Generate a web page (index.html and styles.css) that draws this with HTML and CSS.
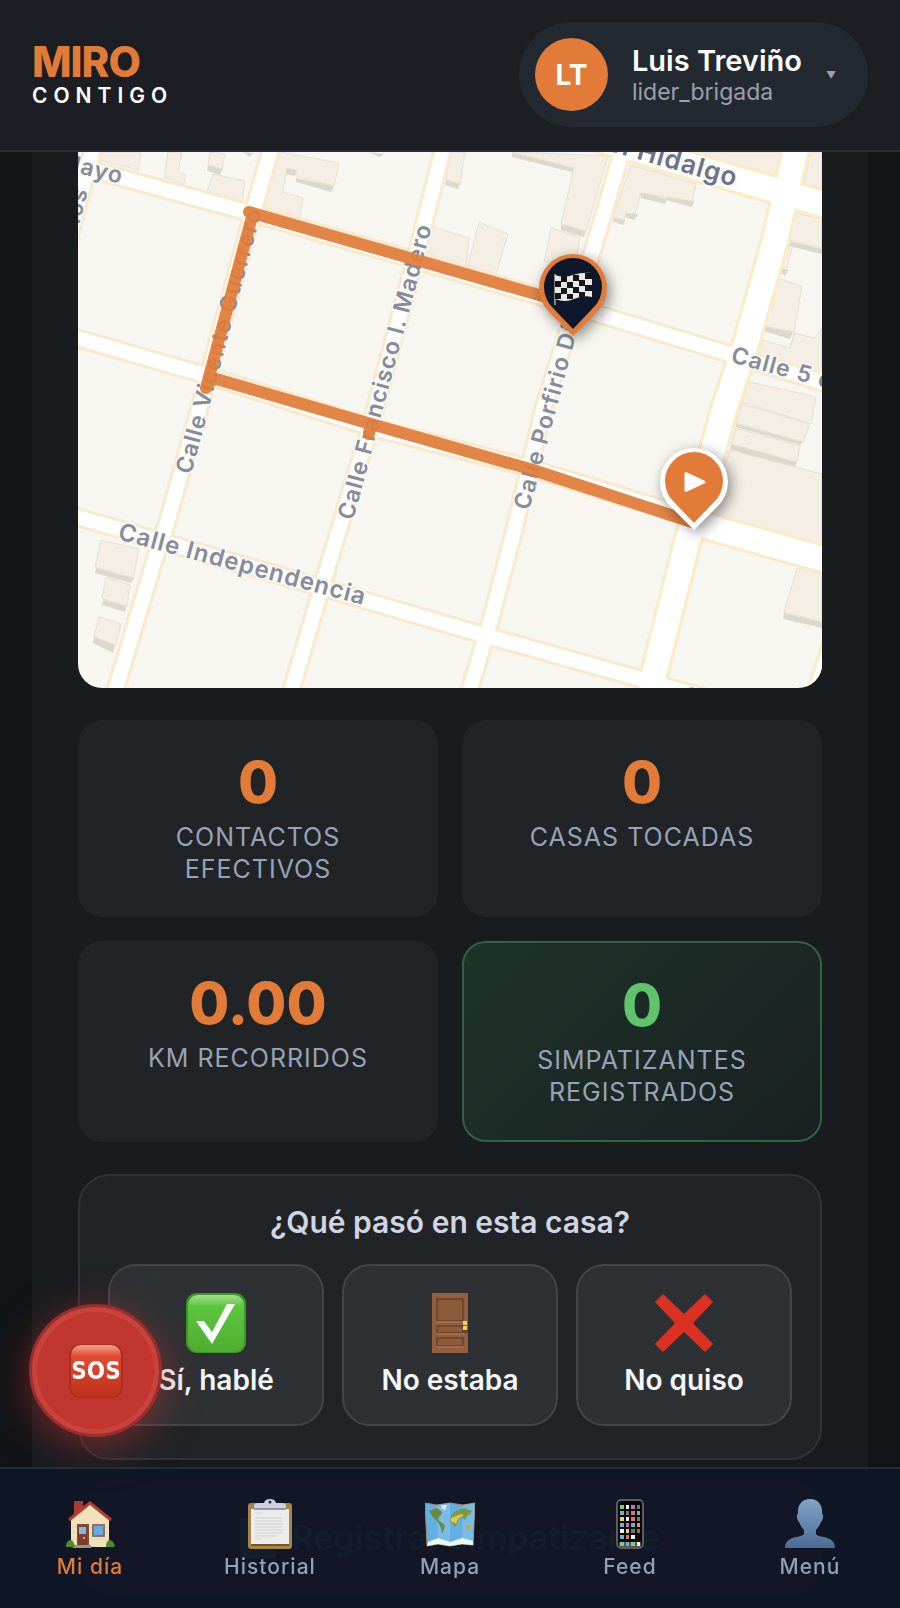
FILE: index.html
```
<!DOCTYPE html>
<html lang="es">
  <head>
    <meta charset="UTF-8" />
    <meta name="viewport" content="width=device-width, initial-scale=1.0" />
    <title>Miro Contigo - Mi día</title>
    <link rel="stylesheet" href="styles.css">
  </head>
  <body>
    <header class="topbar">
      <a class="brand" href="#">
        <span class="brand-name">MIRO</span>
        <span class="brand-sub">CONTIGO</span>
      </a>
      <button class="user" type="button">
        <span class="avatar">LT</span>
        <span class="user-info">
          <span class="user-name">Luis Treviño</span>
          <span class="user-role">lider_brigada</span>
        </span>
        <span class="caret">▼</span>
      </button>
    </header>

    <main class="panel">
      <svg class="map" viewBox="78 152 744 536" role="img" aria-label="Mapa de la ruta">
        <defs>
          <g id="streets-small">
            <path d="M94 145 L77 207 L66 250" />
            <path d="M78 166 L250 213 L400 256 L545 298 L723 352 L830 385" />
            <path d="M70 336 L205 375 L370 427 L530 468 L700 520" />
            <path d="M70 515 L160 541 L323 588 L480 634 L637 678 L720 702" />
            <path d="M272 145 L255 205 L205 388 L167 523 L157 552 L114 695" />
            <path d="M444 145 L420 240 L372 420 L338 533 L323 583 L290 695" />
            <path d="M624 145 L593 250 L568 330 L543 410 L515 527 L490 623 L468 695" />
          </g>
          <g id="streets-big">
            <path d="M797 145 L775 240 L747 340 L724 410 L687 543 L650 690" />
            <path d="M600 139 L740 180 L830 206" />
            <path d="M690 521 L723 531 L830 561" />
            <path d="M838 640 L818 700" />
          </g>
        </defs>
        <rect x="78" y="152" width="744" height="536" fill="#f7f6f0" />

        <!-- buildings: shade first, roof on top -->
        <g class="shade">
          <path d="M208 165 L223 168 L220 175 L207 171 Z" />
          <path d="M296 178 L334 186 L331 192 L296 182 Z" />
          <path d="M286 168 L298 171 L294 176 L286 174 Z" />
          <path d="M368 152 L384 154 L380 157 Z" />
          <path d="M243 152 L253 153 L250 157 Z" />
          <path d="M446 180 L460 184 L458 189 L445 185 Z" />
          <path d="M512 153 L574 167 L572 172 L512 157 Z" />
          <path d="M561 224 L586 231 L584 237 L561 230 Z" />
          <path d="M641 192 L667 199 L665 204 L641 198 Z" />
          <path d="M667 194 L694 201 L692 207 L666 200 Z" />
          <path d="M626 212 L638 214 L634 220 L625 217 Z" />
          <path d="M614 218 L625 220 L624 225 L613 222 Z" />
          <path d="M789 241 L822 249 L822 254 L788 246 Z" />
          <path d="M764 326 L793 332 L790 339 L763 331 Z" />
          <path d="M782 268 L788 270 L785 276 L780 273 Z" />
          <path d="M96 568 L134 578 L131 583 L95 573 Z" />
          <path d="M103 600 L127 606 L125 612 L102 605 Z" />
          <path d="M94 637 L115 645 L113 653 L93 643 Z" />
          <path d="M731 444 L797 462 L795 468 L730 450 Z" />
          <path d="M736 424 L803 442 L800 445 L736 427 Z" />
          <path d="M784 613 L822 622 L822 628 L783 619 Z" />
        </g>
        <g class="roof">
          <path d="M98 152 L141 152 L138 170 L100 160 Z" />
          <path d="M168 152 L182 152 L178 172 L186 175 L184 184 L164 177 Z" />
          <path d="M210 152 L225 154 L222 169 L208 165 Z" />
          <path d="M213 174 L245 181 L242 202 L207 192 Z" />
          <path d="M280 152 L339 163 L334 186 L296 176 L297 170 L287 168 L283 192 L303 198 L299 220 L262 208 Z" />
          <path d="M450 152 L465 152 L460 184 L446 180 Z" />
          <path d="M512 152 L608 156 L586 231 L561 224 L574 168 Z" />
          <path d="M433 227 L469 238 L466 266 L424 253 Z" />
          <path d="M479 222 L508 234 L496 274 L468 265 Z" />
          <path d="M551 228 L580 237 L576 262 L544 262 Z" />
          <path d="M631 165 L696 184 L692 201 L641 193 L635 214 L626 213 L624 220 L613 217 Z" />
          <path d="M668 152 L785 152 L777 178 L730 164 Z" />
          <path d="M810 152 L822 152 L822 191 L804 186 Z" />
          <path d="M795 213 L822 219 L822 248 L789 240 Z" />
          <path d="M792 249 L786 270 L780 268 L786 246 Z" />
          <path d="M777 278 L802 286 L794 332 L764 326 Z" />
          <path d="M759 339 L790 348 L794 333 L815 338 L822 328 L822 373 L756 354 Z" />
          <path d="M746 381 L816 397 L811 424 L742 402 Z" />
          <path d="M742 404 L810 424 L803 442 L736 423 Z" />
          <path d="M736 428 L800 446 L797 462 L731 444 Z" />
          <path d="M730 450 L822 474 L822 545 L709 515 Z" />
          <path d="M797 568 L822 574 L822 622 L784 612 Z" />
          <path d="M101 540 L139 549 L133 578 L95 567 Z" />
          <path d="M106 577 L130 585 L127 606 L102 599 Z" />
          <path d="M99 617 L121 624 L116 645 L94 637 Z" />
        </g>

        <use href="#streets-small" class="casing small" />
        <use href="#streets-big" class="casing big" />
        <use href="#streets-small" class="road small" />
        <use href="#streets-big" class="road big" />

        <g class="street">
          <text transform="translate(121 184) rotate(14)" text-anchor="end">5 de Mayo</text>
          <text transform="translate(88 190) rotate(-76)" text-anchor="end">Morelos</text>
          <text transform="translate(191 475) rotate(-75)">Calle Vicente Guerrero</text>
          <text transform="translate(353 521) rotate(-75)">Calle Francisco I. Madero</text>
          <text transform="translate(529 511) rotate(-75)">Calle Porfirio Díaz</text>
          <text class="long" transform="translate(117 539) rotate(15)">Calle Independencia</text>
          <text transform="translate(730 362) rotate(15)">Calle 5 de Mayo</text>
          <text transform="translate(681 702) rotate(15)">Calle</text>
          <text class="avenue" transform="translate(735 187) rotate(16)" text-anchor="end">Miguel Hidalgo</text>
        </g>

        <path class="route" d="M692 522 L530 469 L480 455 L371 424 L369 434 L371 424 L213 378 L206 388 L253 213 L249 212 L560 301" />

        <g class="pin" transform="translate(573 288)">
          <path fill="#e27b38" d="M-24 24 A34 34 0 1 1 24 24 L0 48 Z" />
          <path fill="#0f172a" d="M-20 20 A29 29 0 1 1 20 20 L0 41 Z" />
          <path d="M-18 -14 V17" stroke="#aaa" stroke-width="1.5" />
          <path fill="#e8e8e8" d="M-18 -13 Q-9 -10 0 -13 T19 -15 V9 Q10 7 1 11 T-18 11 Z" />
          <path fill="#161616" d="M-12 -12 h6 v6 h-6z M0 -13 h6 v6 h-6z M12 -15 h7 v6 h-7z M-18 -7 h6 v6 h-6z M-6 -6 h6 v6 h-6z M6 -8 h6 v6 h-6z M-12 0 h6 v6 h-6z M0 -1 h6 v6 h-6z M12 -3 h7 v6 h-7z M-18 5 h6 v6 h-6z M-6 6 h6 v5 h-6z M6 4 h6 v5 h-6z" />
        </g>
        <g class="pin" transform="translate(694 482)">
          <path fill="#fff" d="M-24 24 A34 34 0 1 1 24 24 L0 48 Z" />
          <path fill="#e27b38" d="M-20 20 A29 29 0 1 1 20 20 L0 41 Z" />
          <path fill="#fff" stroke="#fff" stroke-width="3" stroke-linejoin="round" d="M-8 -8.500 L10 0 L-8 8.500 Z" />
        </g>
      </svg>

      <section class="stats">
        <div class="stat">
          <div class="value">0</div>
          <div class="label">Contactos efectivos</div>
        </div>
        <div class="stat">
          <div class="value">0</div>
          <div class="label">Casas tocadas</div>
        </div>
        <div class="stat">
          <div class="value">0.00</div>
          <div class="label">Km recorridos</div>
        </div>
        <div class="stat green">
          <div class="value">0</div>
          <div class="label">Simpatizantes registrados</div>
        </div>
      </section>

      <section class="visit">
        <h2>¿Qué pasó en esta casa?</h2>
        <div class="choices">
          <button type="button">
            <svg viewBox="0 0 60 60" aria-hidden="true">
              <defs>
                <linearGradient id="g-check" x1="0" y1="0" x2="0" y2="1">
                  <stop offset="0" stop-color="#a5e08c" />
                  <stop offset=".2" stop-color="#5cc63f" />
                  <stop offset="1" stop-color="#4eae30" />
                </linearGradient>
              </defs>
              <rect width="60" height="60" rx="11" fill="#3b9a27" />
              <rect x="2" y="2" width="56" height="57" rx="10" fill="url(#g-check)" />
              <path d="M10 28 H18 L26 39 L41 11 H49 L26 51 Z" fill="#fff" />
            </svg>
            Sí, hablé
          </button>
          <button type="button">
            <svg viewBox="0 0 60 60" aria-hidden="true">
              <rect x="12" width="36" height="60" fill="#935e3f" />
              <path d="M17 6 H43 V28 H17 Z M17 33 H43 V40 H17 Z M17 45 H43 V53 H17 Z" fill="#8e5a3c" stroke="#68402a" stroke-width="1.500" />
              <path d="M16 29 H44 M16 41 H44 M16 54 H44" stroke="#ad7352" stroke-width="1.500" />
              <path d="M43 28 h4 v4 h-4z M43 33 h4 v4 h-4z" fill="#f0cf55" />
              <path d="M43 37 h5 v3 h-5z" fill="#60402b" />
            </svg>
            No estaba
          </button>
          <button type="button">
            <svg viewBox="0 0 60 60" aria-hidden="true">
              <path d="M9 1 L30 21 L51 1 L59 9 L39 30 L59 51 L51 59 L30 39 L9 59 L1 51 L21 30 L1 9 Z" fill="#dc3022" />
            </svg>
            No quiso
          </button>
        </div>
      </section>

      <button class="register" type="button">
        <svg viewBox="0 0 36 40" aria-hidden="true"><path d="M0 0 H36 V40 H0 Z" fill="currentColor" /></svg>
        Registrar simpatizante
      </button>
    </main>

    <button class="sos" type="button" aria-label="Emergencia">
      <svg viewBox="0 0 56 56" aria-hidden="true">
        <defs>
          <linearGradient id="g-sos" x1="0" y1="0" x2="0" y2="1">
            <stop offset="0" stop-color="#f2a293" />
            <stop offset=".22" stop-color="#e5492f" />
            <stop offset="1" stop-color="#bb321d" />
          </linearGradient>
        </defs>
        <rect x="1" y="1" width="54" height="54" rx="11" fill="#ab2e20" />
        <rect x="3" y="2" width="50" height="52" rx="10" fill="url(#g-sos)" />
        <text x="28" y="36" text-anchor="middle">SOS</text>
      </svg>
    </button>

    <nav class="tabs">
      <a class="active" href="#">
        <svg viewBox="0 0 50 50" aria-hidden="true">
          <path d="M9 2 h9 v14 h-9z" fill="#a83c34" />
          <path d="M25 4 L44 21 V48 H6 V21 Z" fill="#f2e2bb" />
          <path d="M7 28 H43 M7 34 H43 M7 40 H43" stroke="#e2d0a6" />
          <path d="M4 21 L25 4 L46 21" fill="none" stroke="#b53d36" stroke-width="3" />
          <path d="M12 25 h12 v22 h-12z" fill="#76503b" />
          <path d="M13 27 h9 v20 h-9z" fill="#7e3d2c" />
          <path d="M14 28 h7 v7 h-7z" fill="#84b9e8" />
          <path d="M27 25 h13 v13 h-13z" fill="#8a735c" />
          <path d="M29 27 h9 v9 h-9z" fill="#6ba9e4" />
          <circle cx="19" cy="39" r="1" fill="#f2cf6b" />
          <path d="M8 46 h18 v3 h-18z" fill="#9b948a" />
          <path d="M1 48 q0 -7 5 -7 q3 1 4 7z M41 48 q0 -7 4 -7 q4 1 5 7z" fill="#4e8a32" />
        </svg>
        Mi día
      </a>
      <a href="#">
        <svg viewBox="0 0 50 50" aria-hidden="true">
          <rect x="3" y="4" width="44" height="46" rx="3" fill="#a98449" />
          <path d="M6 10 h38 v35 h-38z" fill="#ececec" />
          <path d="M6 45 h38 v2 h-38z" fill="#77572a" />
          <path d="M10 14 h7 M10 19 h27 M10 22 h27 M10 25 h28 M10 28 h27 M10 31 h28 M10 34 h27 M10 37 h21 M10 40 h6" stroke="#cfcfcf" />
          <path d="M9 10 V7 Q9 4 13 4 H19 Q20 0 25 0 T31 4 H37 Q41 4 41 7 V10 Z" fill="#cbd0df" />
          <path d="M9 10 h32" stroke="#7d8294" stroke-width="1.500" />
          <circle cx="25" cy="3" r="1.500" fill="#273047" />
        </svg>
        Historial
      </a>
      <a href="#">
        <svg viewBox="0 0 50 50" aria-hidden="true">
          <path d="M0 4 L12 6 L25 4 L38 6 L50 4 L48 46 L37 45 L25 47 L13 45 L2 47 Z" fill="#61afe4" stroke="#a98a62" />
          <path d="M12 6 L25 4 V47 L13 45 Z M38 6 L50 4 L48 46 L37 45 Z" fill="#94c9ea" opacity=".5" />
          <path d="M4 12 L12 9 L17 13 L16 16 L14 18 L13 21 L17 24 L20 26 L19 30 L17 35 L16 29 L13 23 L8 18 Z" fill="#6d8a3a" />
          <path d="M26 17 L29 13 L34 11 L40 9 L47 12 L45 15 L42 17 L40 21 L37 18 L34 20 L32 25 L30 29 L28 25 L25 22 Z" fill="#7b9a3f" />
          <path d="M26 19 L36 15 L39 16 L33 20 L31 25 L26 22 Z" fill="#e2c650" />
          <path d="M40 27 l5 -1 l1 3 l-4 2z" fill="#c8a63d" />
          <path d="M16 6 l6 0 l-2 5 l-3 -1z" fill="#dce6e8" />
          <path d="M3 43 L13 39 L25 43 L37 39 L48 42 L48 46 L37 45 L25 47 L13 45 L2 47 Z" fill="#eff5f7" />
        </svg>
        Mapa
      </a>
      <a href="#">
        <svg viewBox="0 0 50 50" aria-hidden="true">
          <rect x="12" y="1" width="26" height="48" rx="4" fill="#060606" stroke="#777" stroke-width="1.500" />
          <path d="M14 43 h22 v5 h-22z" fill="#555" />
          <path d="M15 6h4v4h-4z M15 43h4v4h-4z M26 43h4v4h-4z" fill="#7bcf75" />
          <path d="M21 6h3v4h-3z M21 18h3v4h-3z M15 30h4v4h-4z M26 36h4v4h-4z M32 43h3v4h-3z" fill="#f0f0f0" />
          <path d="M26 6h4v4h-4z M21 24h3v4h-3z" fill="#b875c8" />
          <path d="M15 12h4v4h-4z M32 12h3v4h-3z M15 24h4v4h-4z M26 24h4v4h-4z M15 36h4v4h-4z M21 43h3v4h-3z" fill="#63b2e0" />
          <path d="M15 18h4v4h-4z M21 30h3v4h-3z" fill="#f1d06a" />
          <path d="M26 12h4v4h-4z M26 18h4v4h-4z M21 36h3v4h-3z" fill="#d9786d" />
          <path d="M32 24h3v4h-3z" fill="#ec9638" />
          <path d="M32 6h3v4h-3z M21 12h3v4h-3z M32 18h3v4h-3z M26 30h4v4h-4z M32 30h3v4h-3z" fill="#777" />
        </svg>
        Feed
      </a>
      <a href="#">
        <svg viewBox="0 0 50 50" aria-hidden="true">
          <defs>
            <linearGradient id="g-user" x1="0" y1="0" x2="0" y2="1">
              <stop offset="0" stop-color="#83a4c6" />
              <stop offset="1" stop-color="#4c6c96" />
            </linearGradient>
          </defs>
          <path fill="url(#g-user)" d="M25 0 C33 0 38 6 37 15 C39 15 38 22 36 23 Q34 28 31 31 V35 Q32 37 39 38 C47 40 50 43 50 49 H0 C0 43 3 40 11 38 Q18 37 19 35 V31 Q16 28 14 23 C12 22 11 15 13 15 C12 6 17 0 25 0 Z" />
        </svg>
        Menú
      </a>
    </nav>
  </body>
</html>
```
FILE: styles.css
```
* {
  box-sizing: border-box;
}
body {
  margin: 0;
  min-height: 100vh;
  display: flex;
  flex-direction: column;
  background: #101417;
  color: #fff;
  font-family: Inter, "Liberation Sans", sans-serif;
}
button {
  font: inherit;
  color: inherit;
  border: none;
  cursor: pointer;
}
a {
  color: inherit;
  text-decoration: none;
}

/* header */
.topbar {
  position: sticky;
  top: 0;
  z-index: 10;
  display: flex;
  align-items: center;
  justify-content: space-between;
  padding: 22px 32px 23px;
  background: #1b1e23;
  border-bottom: 2px solid #282d38;
}
.brand {
  display: flex;
  flex-direction: column;
}
.brand-name {
  color: #e27b38;
  font-size: 42px;
  line-height: 42px;
  font-weight: 800;
  letter-spacing: -1px;
}
.brand-sub {
  font-size: 21px;
  line-height: 26px;
  font-weight: 600;
  letter-spacing: 6px;
}
.user {
  display: flex;
  align-items: center;
  gap: 24px;
  padding: 16px 32px 16px 16px;
  border-radius: 53px;
  background: #232931;
  text-align: left;
}
.avatar {
  display: grid;
  place-items: center;
  width: 73px;
  height: 73px;
  border-radius: 50%;
  background: #e27b38;
  font-size: 28px;
  font-weight: 700;
}
.user-info {
  display: flex;
  flex-direction: column;
}
.user-name {
  font-size: 29px;
  line-height: 34px;
  font-weight: 600;
}
.user-role {
  color: #9ca0ad;
  font-size: 23px;
  line-height: 28px;
}
.caret {
  color: #9ca0ad;
  font-size: 10px;
}

/* content */
.panel {
  flex: 1;
  margin: 0 32px;
  padding: 0 46px 13px;
  background: #181c1f;
}
.map {
  display: block;
  width: 100%;
  height: auto;
  border-radius: 0 0 24px 24px;
}
.map .roof {
  fill: #f4eee4;
  stroke: #e6e0d3;
}
.map .shade {
  fill: #ddd8cb;
}
.casing,
.road,
.route {
  fill: none;
  stroke-linejoin: round;
}
.casing {
  stroke: #fbe9cd;
}
.road {
  stroke: #fff;
}
.casing.small {
  stroke-width: 20px;
}
.casing.big {
  stroke: #fcebc3;
  stroke-width: 30px;
}
.road.small {
  stroke-width: 14px;
}
.road.big {
  stroke-width: 24px;
}
.street text {
  fill: #858c9c;
  stroke: #fbfaf6;
  stroke-width: 3px;
  paint-order: stroke;
  font-size: 23px;
  font-weight: 600;
  letter-spacing: 1px;
}
.street .long {
  font-size: 24px;
}
.street .avenue {
  fill: #6b7385;
  font-size: 26px;
}
.route {
  stroke: #e27b38;
  stroke-width: 12px;
  stroke-linecap: round;
  opacity: 0.92;
}
.pin {
  filter: drop-shadow(3px 4px 7px rgba(0, 0, 0, 0.45));
}

.stats {
  display: grid;
  grid-template-columns: 1fr 1fr;
  gap: 24px;
  margin-top: 32px;
}
.stat {
  padding: 32px;
  border-radius: 24px;
  background: #202427;
  text-align: center;
}
.stat .value {
  margin-bottom: 9px;
  color: #e27b38;
  font-size: 58px;
  line-height: 60px;
  font-weight: 800;
}
.stat .label {
  color: #98a2b6;
  font-size: 25px;
  line-height: 32px;
  letter-spacing: 1px;
  text-transform: uppercase;
}
.stat.green {
  border: 2px solid #30643f;
  background: linear-gradient(135deg, #1e3329, #1a2022);
}
.stat.green .value {
  color: #60c26a;
}

.visit {
  margin-top: 32px;
  padding: 28px 28px 32px;
  border: 2px solid #303437;
  border-radius: 32px;
  background: #202427;
}
.visit h2 {
  margin: 0 0 24px;
  color: #d0d5e1;
  font-size: 30px;
  line-height: 36px;
  font-weight: 600;
  text-align: center;
}
.choices {
  display: grid;
  grid-template-columns: repeat(3, 1fr);
  gap: 18px;
}
.choices button {
  display: flex;
  flex-direction: column;
  align-items: center;
  gap: 10px;
  padding: 27px 10px;
  border: 2px solid #424649;
  border-radius: 28px;
  background: #2d3134;
  color: #f4f6f8;
  font-size: 28px;
  line-height: 34px;
  font-weight: 600;
}
.choices svg {
  width: 60px;
  height: 60px;
}

.register {
  display: flex;
  align-items: center;
  justify-content: center;
  gap: 16px;
  width: 100%;
  height: 115px;
  margin-top: 20px;
  border-radius: 32px;
  background: #4a1c30;
  color: #78a08c;
  font-size: 34px;
  font-weight: 600;
}
.register svg {
  width: 36px;
  height: 40px;
}

/* floating button */
.sos {
  position: fixed;
  left: 29px;
  bottom: 171px;
  z-index: 5;
  display: grid;
  place-items: center;
  width: 133px;
  height: 133px;
  padding: 0;
  border: 3px solid #992f2d;
  border-radius: 50%;
  background: #c1362f;
  box-shadow: inset 0 0 0 5px #c8433e, 0 8px 40px rgba(210, 50, 50, 0.5);
}
.sos svg {
  width: 56px;
  height: 56px;
}
.sos text {
  fill: #fff;
  font-family: "Liberation Sans Narrow", "DejaVu Sans Condensed", Roboto, sans-serif;
  font-size: 24px;
  font-weight: 700;
}

/* bottom tabs */
.tabs {
  position: fixed;
  left: 0;
  right: 0;
  bottom: 0;
  z-index: 10;
  display: grid;
  grid-template-columns: repeat(5, 1fr);
  padding: 30px 0 28px;
  border-top: 2px solid #232b39;
  background: rgba(15, 22, 38, 0.95);
}
.tabs a {
  display: flex;
  flex-direction: column;
  align-items: center;
  gap: 5px;
  color: #94a0b5;
  font-size: 21px;
  line-height: 26px;
  font-weight: 500;
  letter-spacing: 1px;
}
.tabs a.active {
  color: #e27b38;
}
.tabs svg {
  width: 50px;
  height: 50px;
}
```
